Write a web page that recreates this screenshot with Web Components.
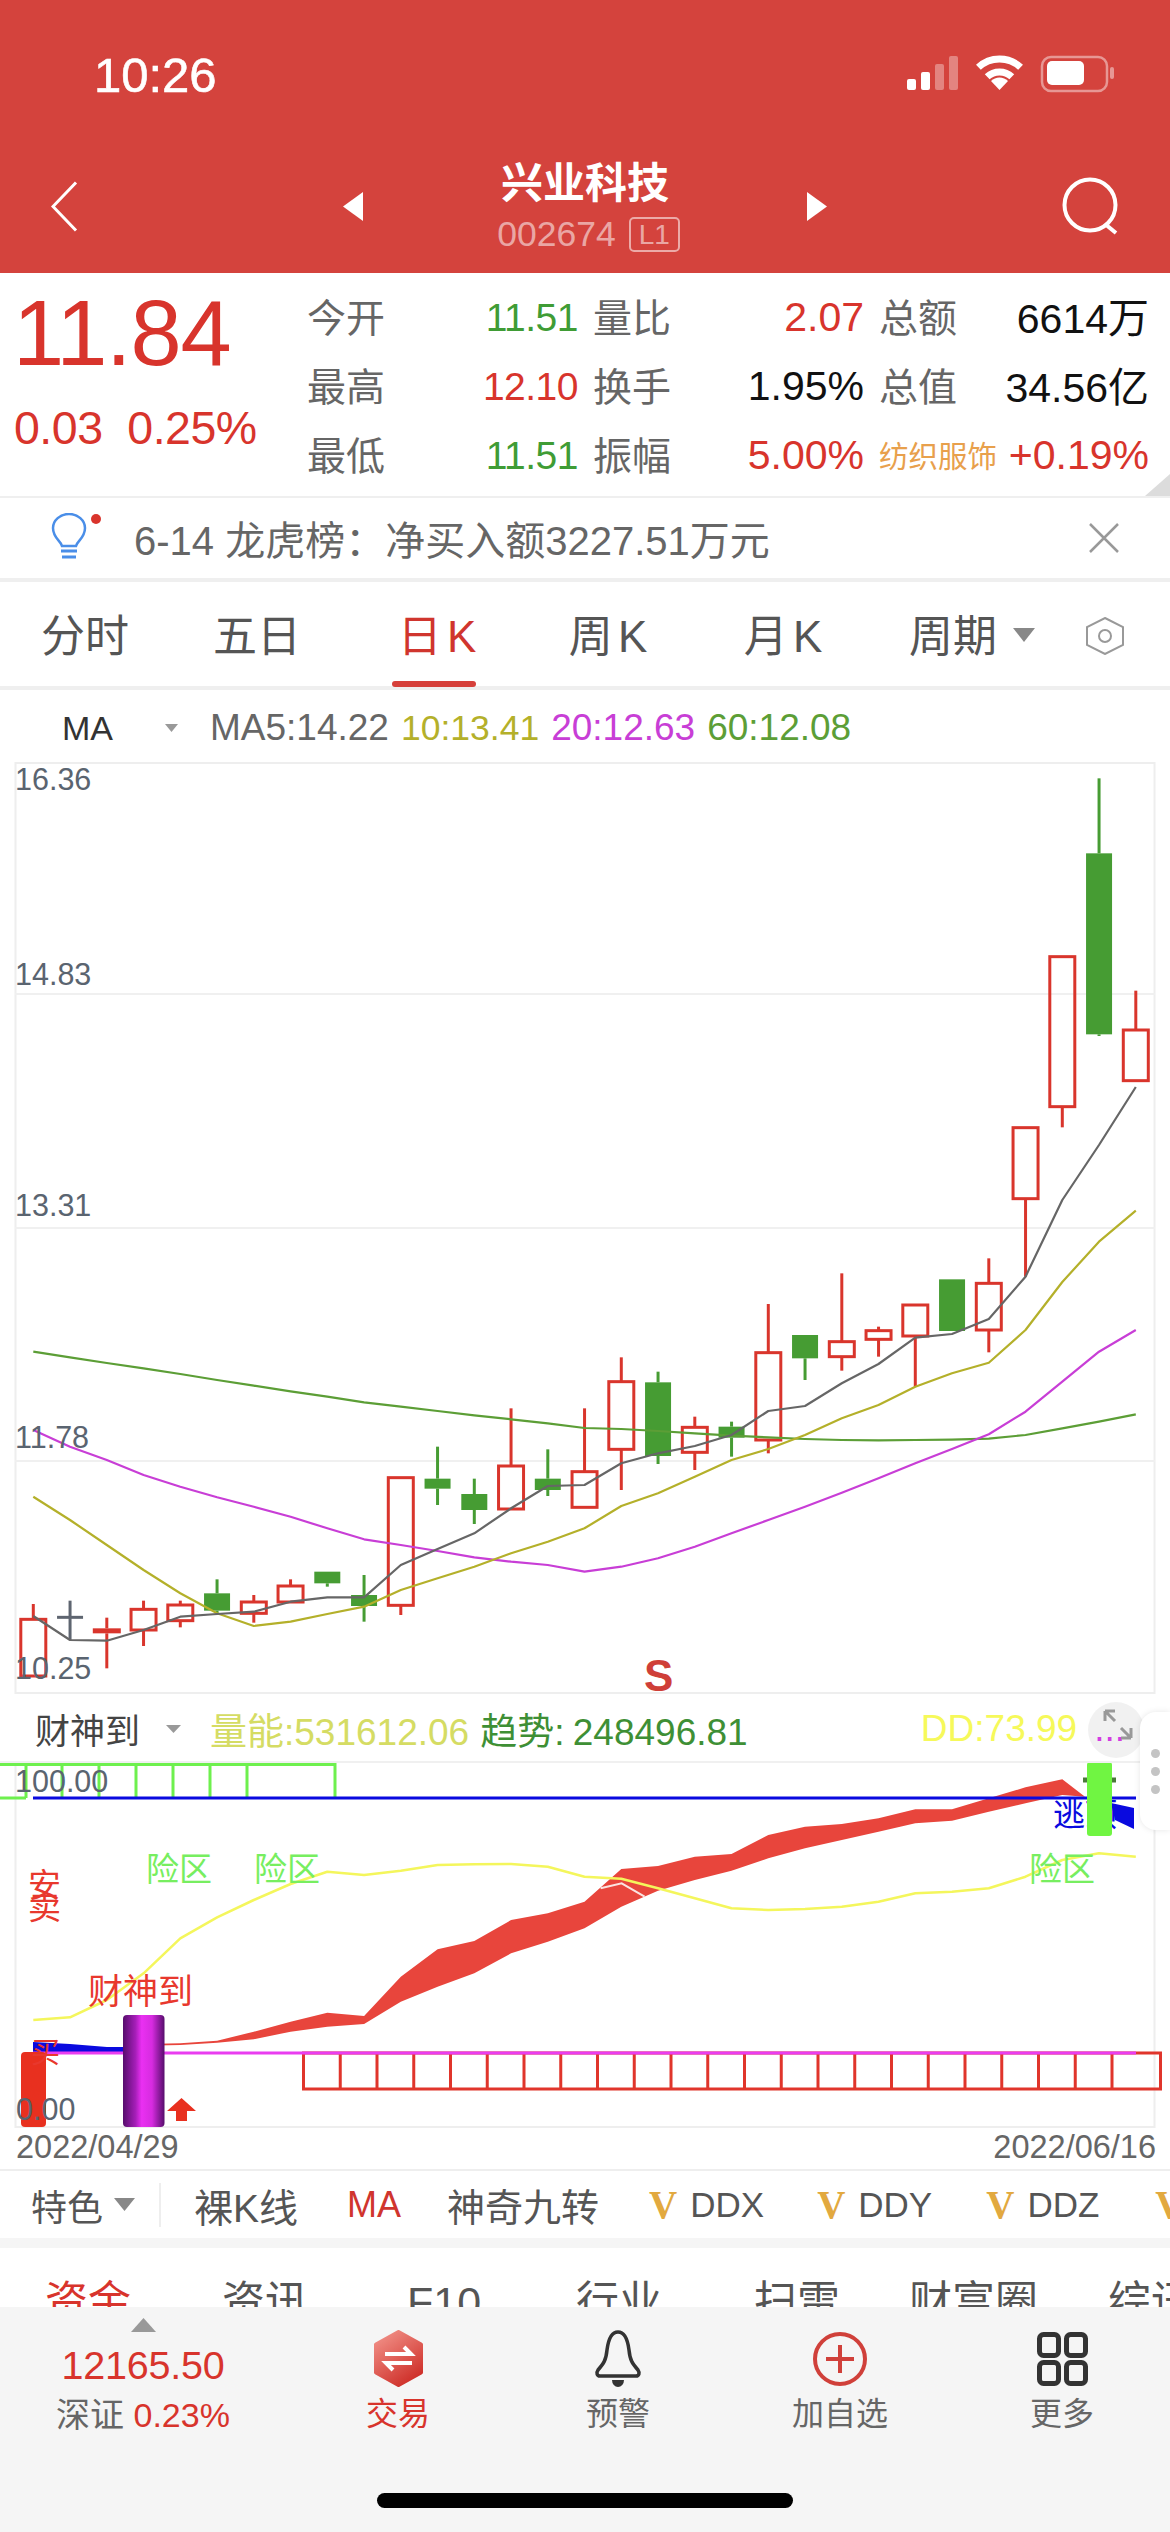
<!DOCTYPE html>
<html lang="zh">
<head>
<meta charset="utf-8">
<title>兴业科技</title>
<style>
  html, body { margin: 0; background: #fff; }
  body {
    width: 1170px; height: 2532px; overflow: hidden;
    font-family: "Liberation Sans", "Noto Sans CJK SC", sans-serif;
    color: #333;
  }
</style>
</head>
<body>
<status-bar></status-bar>
<stock-nav name="兴业科技" code="002674"></stock-nav>
<quote-panel></quote-panel>
<notice-bar>6-14 龙虎榜：净买入额3227.51万元</notice-bar>
<period-tabs>
  <period-tab>分时</period-tab>
  <period-tab>五日</period-tab>
  <period-tab active>日 K</period-tab>
  <period-tab>周 K</period-tab>
  <period-tab>月 K</period-tab>
  <period-tab caret>周期</period-tab>
</period-tabs>
<ma-legend></ma-legend>
<kline-chart></kline-chart>
<indicator-head></indicator-head>
<indicator-chart></indicator-chart>
<date-axis from="2022/04/29" to="2022/06/16"></date-axis>
<chip-row></chip-row>
<detail-tabs></detail-tabs>
<bottom-bar>
  <index-item></index-item>
  <bottom-item label="交易" active>
    <svg width="51" height="57" viewBox="0 0 51 57">
      <defs><linearGradient id="tradeFill" x1="0.2" y1="0" x2="0.8" y2="1"><stop offset="0" stop-color="#f08d84"/><stop offset="1" stop-color="#cd2b25"/></linearGradient></defs>
      <path d="M25.5 2 L48 14.5 V42.5 L25.5 55 L3 42.5 V14.5 Z" fill="url(#tradeFill)" stroke="url(#tradeFill)" stroke-width="4" stroke-linejoin="round"/>
      <path d="M12 24 H38 L31 17 M39 33 H13 L20 40" fill="none" stroke="#fff" stroke-width="4"/>
    </svg>
  </bottom-item>
  <bottom-item label="预警">
    <svg width="48" height="57" viewBox="0 0 48 57">
      <path d="M24 2 C16 2 14 12 13 20 C12 30 10 33 4 40 C2 43 3 46 6 46 H42 C45 46 46 43 44 40 C38 33 36 30 35 20 C34 12 32 2 24 2 Z" fill="none" stroke="#333" stroke-width="3.5"/>
      <path d="M18 50 H30 A6 7 0 0 1 18 50 Z" fill="#333"/>
    </svg>
  </bottom-item>
  <bottom-item label="加自选">
    <svg width="54" height="54" viewBox="0 0 54 54">
      <circle cx="27" cy="27" r="25" fill="none" stroke="#d0403a" stroke-width="4"/>
      <path d="M27 13 V41 M13 27 H41" stroke="#d0403a" stroke-width="4"/>
    </svg>
  </bottom-item>
  <bottom-item label="更多">
    <svg width="51" height="54" viewBox="0 0 51 54">
      <g fill="none" stroke="#333" stroke-width="5">
        <rect x="2.5" y="2.5" width="19" height="21" rx="4"/>
        <rect x="29.5" y="2.5" width="19" height="21" rx="4"/>
        <rect x="2.5" y="30.5" width="19" height="21" rx="4"/>
        <rect x="29.5" y="30.5" width="19" height="21" rx="4"/>
      </g>
    </svg>
  </bottom-item>
</bottom-bar>

<script>
const RED = '#d8342c';
const GREEN = '#3f9c35';
// x of the n-th candle, shared by both charts
const slotX = (i) => 33.3 + 36.75 * i;

class StatusBar extends HTMLElement {
  connectedCallback() {
    this.attachShadow({ mode: 'open' });
    this.shadowRoot.innerHTML = `
      <style>
        :host { display: flex; align-items: center; justify-content: space-between; height: 149px; box-sizing: border-box;
                padding: 0 52px 0 94px; background: #d4433d; color: #fff; }
        .time { font-size: 49px; font-weight: 500; -webkit-text-stroke: 0.6px #fff; }
        svg { display: block; margin-top: -1px; }
      </style>
      <span class="time">10:26</span>
      <svg width="211" height="40" viewBox="0 0 211 40">
        <g fill="#fff">
          <rect x="0" y="25" width="9" height="11" rx="2"/>
          <rect x="14" y="18" width="9" height="18" rx="2"/>
          <rect x="28" y="10" width="9" height="26" rx="2" opacity=".35"/>
          <rect x="42" y="2" width="9" height="34" rx="2" opacity=".35"/>
          <path d="M92.500 36 L84 27 A12 12 0 0 1 101 27 Z"/>
        </g>
        <g fill="none" stroke="#fff" stroke-width="7">
          <path d="M71.400 13.300 A31 31 0 0 1 113.600 13.300"/>
          <path d="M80.200 22.800 A18 18 0 0 1 104.800 22.800"/>
        </g>
        <rect x="135" y="3" width="65" height="34" rx="9" fill="none" stroke="#fff" stroke-width="2.500" opacity=".45"/>
        <rect x="140" y="7" width="37" height="24" rx="5" fill="#fff"/>
        <rect x="203" y="13" width="4" height="12" rx="2" fill="#fff" opacity=".45"/>
      </svg>
    `;
  }
}

class StockNav extends HTMLElement {
  connectedCallback() {
    this.attachShadow({ mode: 'open' });
    this.shadowRoot.innerHTML = `
      <style>
        :host { display: grid; grid-template-columns: 343px 20px 1fr 20px 343px; height: 124px; background: #d4433d; color: #fff; }
        .cell { display: flex; align-items: center; height: 114px; }
        .back { padding-left: 51px; }
        .search { justify-content: flex-end; padding-right: 50px; }
        .mid { text-align: center; }
        .name { font-size: 42px; line-height: 50px; margin-top: 10px; font-weight: 700; }
        .code { display: flex; justify-content: center; align-items: center; gap: 13px; height: 40px; margin-top: 5px; padding-left: 7px;
                color: rgba(255,255,255,.55); font-size: 35.500px; }
        .lv { border: 2px solid rgba(255,255,255,.55); border-radius: 5px; font-size: 28px; line-height: 31px; padding: 0 8px; }
      </style>
      <div class="cell back">
        <svg width="27" height="51" viewBox="0 0 27 51"><path d="M25 1.500 L2 25.500 L25 49.500" fill="none" stroke="#fff" stroke-width="3"/></svg>
      </div>
      <div class="cell">
        <svg width="20" height="29" viewBox="0 0 20 29"><path d="M20 0 V29 L0 14.500 Z" fill="#fff"/></svg>
      </div>
      <div class="mid">
        <div class="name">${this.getAttribute('name')}</div>
        <div class="code"><span>${this.getAttribute('code')}</span><span class="lv">L1</span></div>
      </div>
      <div class="cell">
        <svg width="20" height="29" viewBox="0 0 20 29"><path d="M0 0 V29 L20 14.500 Z" fill="#fff"/></svg>
      </div>
      <div class="cell search">
        <svg width="60" height="58" viewBox="0 0 60 58"><circle cx="30" cy="28" r="25.500" fill="none" stroke="#fff" stroke-width="4"/><path d="M45 47 L56 56" stroke="#fff" stroke-width="4"/></svg>
      </div>
    `;
  }
}

class QuotePanel extends HTMLElement {
  connectedCallback() {
    this.attachShadow({ mode: 'open' });
    const rows = [
      ['今开', '11.51', GREEN, '量比', '2.07', RED, '总额', '6614万', '#111'],
      ['最高', '12.10', RED, '换手', '1.95%', '#111', '总值', '34.56亿', '#111'],
      ['最低', '11.51', GREEN, '振幅', '5.00%', RED, '纺织服饰', '+0.19%', RED],
    ];
    const cells = rows.map((r) => `
      <span class="l">${r[0]}</span><span class="v first" style="color:${r[2]}">${r[1]}</span>
      <span class="l in">${r[3]}</span><span class="v" style="color:${r[5]}">${r[4]}</span>
      <span class="l in ${r[6].length > 2 ? 'sector' : ''}">${r[6]}</span><span class="v ${/[万亿]/.test(r[7]) ? 'unit' : ''}" style="color:${r[8]}">${r[7]}</span>
    `).join('');
    this.shadowRoot.innerHTML = `
      <style>
        :host { display: flex; position: relative; height: 225px; box-sizing: border-box; border-bottom: 2px solid #efefef; padding-left: 13px; }
        .price { width: 294px; color: ${RED}; }
        .big { font-size: 92px; line-height: 100px; margin-top: 10px; letter-spacing: -1.200px; }
        .chg { font-size: 46.500px; line-height: 50px; margin: 20px 0 0 1px; letter-spacing: -0.5px; white-space: pre; }
        .grid { display: grid; grid-template-columns: 77px 194px 92px 194px 92px 193px; grid-auto-rows: 69px; align-items: center; padding-top: 10px; white-space: nowrap; }
        .l { font-size: 39px; color: #666; margin-bottom: 6px; }
        .in { padding-left: 15px; }
        .sector { font-size: 29.500px; color: #e8a04c; margin-bottom: 4px; }
        .v { font-size: 41px; text-align: right; }
        .unit { margin-bottom: 6px; }
        .first { font-size: 39px; letter-spacing: -0.5px; }
        .corner { position: absolute; right: 0; bottom: 0; }
      </style>
      <div class="price">
        <div class="big">11.84</div>
        <div class="chg">0.03  0.25%</div>
      </div>
      <div class="grid">${cells}</div>
      <svg class="corner" width="25" height="22" viewBox="0 0 25 22"><path d="M25 0 V22 H0 Z" fill="#dcdcdc"/></svg>
    `;
  }
}

class NoticeBar extends HTMLElement {
  connectedCallback() {
    this.attachShadow({ mode: 'open' });
    this.shadowRoot.innerHTML = `
      <style>
        :host { display: flex; align-items: center; height: 84px; box-sizing: border-box; border-bottom: 4px solid #efefef; padding: 0 51px; }
        .text { margin-left: 33px; flex: 1; font-size: 40px; color: #666; white-space: nowrap; }
        svg { display: block; flex-shrink: 0; }
      </style>
      <svg width="50" height="50" viewBox="0 0 50 50">
        <path d="M11 33 C10 28 2 25 2 15 A16 14 0 0 1 34 15 C34 25 26 28 25 33 Z" fill="none" stroke="#4a8ee8" stroke-width="2.500"/>
        <path d="M10 38 H26 M11 44 H25" stroke="#4a8ee8" stroke-width="3"/>
        <circle cx="45" cy="6" r="5" fill="#d9342c"/>
      </svg>
      <span class="text"><slot></slot></span>
      <svg width="30" height="30" viewBox="0 0 30 30"><path d="M1 1 L29 29 M29 1 L1 29" stroke="#999" stroke-width="2.500"/></svg>
    `;
  }
}

class PeriodTabs extends HTMLElement {
  connectedCallback() {
    this.attachShadow({ mode: 'open' });
    this.shadowRoot.innerHTML = `
      <style>
        :host { display: grid; grid-template-columns: 170px 174px 186px 156px 194px 146px 1fr; position: relative; height: 108px; box-sizing: border-box; border-bottom: 4px solid #efefef; }
        svg { align-self: center; margin: 4px 0 0 57px; }
      </style>
      <slot></slot>
      <svg width="44" height="38" viewBox="0 0 44 38"><path d="M22 1 L40 10 V28 L22 37 L4 28 V10 Z" fill="none" stroke="#999" stroke-width="2"/><circle cx="22" cy="19" r="6" fill="none" stroke="#999" stroke-width="2"/></svg>
    `;
  }
}

class PeriodTab extends HTMLElement {
  connectedCallback() {
    this.attachShadow({ mode: 'open' });
    const active = this.hasAttribute('active');
    const caret = this.hasAttribute('caret');
    this.shadowRoot.innerHTML = `
      <style>
        :host { display: flex; align-items: center; justify-content: center; gap: 16px; position: relative; height: 104px; padding-bottom: 2px; box-sizing: border-box;
                font-size: 44px; word-spacing: -7px; white-space: nowrap; color: ${active ? '#d0352e' : '#555'}; }
        .bar { position: absolute; left: calc(50% - 45px); bottom: -1px; width: 84px; height: 6px; border-radius: 3px; background: #d6403a; }
        .caret { margin-right: -38px; margin-top: 4px; }
      </style>
      <slot></slot>
      ${caret ? '<svg class="caret" width="22" height="14" viewBox="0 0 22 14"><path d="M0 0 H22 L11 14 Z" fill="#888"/></svg>' : ''}
      ${active ? '<span class="bar"></span>' : ''}
    `;
  }
}

class MaLegend extends HTMLElement {
  connectedCallback() {
    this.attachShadow({ mode: 'open' });
    this.shadowRoot.innerHTML = `
      <style>
        :host { display: flex; align-items: center; height: 72px; padding: 4px 0 0 62px; box-sizing: border-box; font-size: 34px; white-space: nowrap; }
        .name { color: #333; }
        svg { margin: 0 32px 0 52px; }
        span + span { margin-left: 12px; }
        .n { font-size: 37px; }
      </style>
      <span class="name">MA</span>
      <svg width="13" height="8" viewBox="0 0 13 8"><path d="M0 0 H13 L6.500 8 Z" fill="#999"/></svg>
      <span class="n" style="color:#666">MA5:14.22</span>
      <span class="n" style="color:#b4b02a;font-size:35.500px">10:13.41</span>
      <span class="n" style="color:#c83ed6">20:12.63</span>
      <span class="n" style="color:#5c9e36">60:12.08</span>
    `;
  }
}

const polyline = (vals, yOf, color, width) => {
  const pts = vals.map((v, i) => `${slotX(i).toFixed(1)},${yOf(v).toFixed(1)}`).join(' ');
  return `<polyline points="${pts}" fill="none" stroke="${color}" stroke-width="${width}" stroke-linejoin="round"/>`;
};

class KlineChart extends HTMLElement {
  connectedCallback() {
    this.attachShadow({ mode: 'open' });
    // values are read off 3x crops: y = 1250 + v / 3
    const yOf = (v) => 1250 + v / 3;
    // [wick top, body top, body bottom, wick bottom, kind]
    const candles = [
      [1062, 1108, 1278, 1278, 'r'], [1052, 1102, 1102, 1170, 'd'], [1103, 1135, 1150, 1255, 'f'], [1052, 1078, 1140, 1188, 'r'],
      [1052, 1065, 1112, 1132, 'r'], [988, 1030, 1082, 1090, 'g'], [1035, 1056, 1090, 1118, 'r'], [988, 1008, 1056, 1056, 'r'],
      [965, 965, 1000, 1010, 'g'], [975, 1035, 1068, 1115, 'g'], [683, 683, 1066, 1095, 'r'], [590, 686, 716, 765, 'g'],
      [686, 732, 780, 822, 'g'], [475, 648, 777, 777, 'r'], [598, 686, 720, 738, 'g'], [475, 665, 772, 772, 'r'],
      [322, 395, 598, 720, 'r'], [365, 397, 618, 642, 'g'], [500, 532, 607, 660, 'r'], [515, 530, 563, 620, 'g'],
      [162, 308, 570, 610, 'r'], [255, 255, 325, 390, 'g'], [70, 275, 320, 362, 'r'], [230, 242, 268, 320, 'r'],
      [165, 165, 258, 410, 'r'], [88, 88, 243, 243, 'g'], [25, 100, 240, 307, 'r'], [-367, -367, -154, 80, 'r'],
      [-880, -880, -430, -368, 'r'], [-1415, -1190, -647, -642, 'g'], [-778, -660, -508, -508, 'r'],
    ];
    const ma5 = [1098, 1170, 1172, 1140, 1100, 1092, 1085, 1055, 1042, 1042, 945, 897, 850, 775, 708, 705, 640, 610, 588, 555, 483, 468, 400, 342, 263, 252, 207, 80, -150, -315, -489];
    const ma10 = [740, 810, 885, 960, 1030, 1090, 1128, 1115, 1092, 1070, 1020, 985, 950, 910, 875, 835, 768, 730, 680, 630, 597, 555, 505, 465, 410, 370, 338, 240, 96, -25, -118];
    const ma20 = [540, 590, 630, 675, 710, 742, 770, 800, 835, 868, 885, 903, 922, 935, 945, 965, 950, 925, 890, 850, 810, 770, 728, 685, 640, 597, 553, 485, 395, 305, 240];
    const ma60 = [305, 322, 339, 355, 372, 390, 407, 424, 440, 457, 470, 483, 496, 508, 520, 534, 537, 543, 550, 557, 562, 567, 570, 571, 570, 569, 566, 555, 535, 515, 493];

    const bars = candles.map(([wt, bt, bb, wb, kind], i) => {
      const x = slotX(i);
      const c = kind === 'g' ? '#469c33' : kind === 'd' ? '#5e6570' : '#d9352c';
      let out = '';
      if (wt < bt) out += `<line x1="${x}" x2="${x}" y1="${yOf(wt)}" y2="${yOf(bt)}" stroke="${c}" stroke-width="3"/>`;
      if (wb > bb) out += `<line x1="${x}" x2="${x}" y1="${yOf(bb)}" y2="${yOf(wb)}" stroke="${c}" stroke-width="3"/>`;
      const top = yOf(bt), h = yOf(bb) - top;
      if (kind === 'd') out += `<line x1="${x - 13}" x2="${x + 13}" y1="${top}" y2="${top}" stroke="${c}" stroke-width="3"/>`;
      if (kind === 'r') out += `<rect x="${x - 12.5}" y="${top}" width="25" height="${h}" fill="none" stroke="${c}" stroke-width="3"/>`;
      if (kind === 'g') out += `<rect x="${x - 13}" y="${top}" width="26" height="${h}" fill="${c}"/>`;
      if (kind === 'f') out += `<rect x="${x - 14}" y="${top}" width="28" height="${h}" fill="${c}"/>`;
      return out;
    }).join('');

    this.shadowRoot.innerHTML = `
      <style>
        :host { display: block; height: 932px; }
        svg { display: block; }
        .lb { font-size: 30.500px; fill: #5a6470; }
        .s { font-size: 44px; font-weight: 700; fill: #cf3f38; }
      </style>
      <svg width="1170" height="932" viewBox="0 762 1170 932">
        <rect x="15.500" y="763" width="1139" height="930" fill="none" stroke="#eee" stroke-width="2"/>
        <path d="M15 994 H1155 M15 1228 H1155 M15 1461 H1155" stroke="#f0f0f0" stroke-width="2"/>
        ${bars}
        ${polyline(ma60, yOf, '#5c9e36', 2.2)}
        ${polyline(ma20, yOf, '#c83ed6', 2.2)}
        ${polyline(ma10, yOf, '#b4b02a', 2.2)}
        ${polyline(ma5, yOf, '#666', 2.2)}
        <text class="lb" x="15" y="790">16.36</text>
        <text class="lb" x="15" y="985">14.83</text>
        <text class="lb" x="15" y="1216">13.31</text>
        <text class="lb" x="15" y="1448">11.78</text>
        <text class="lb" x="15" y="1679">10.25</text>
        <text class="s" x="644" y="1691">S</text>
      </svg>
    `;
  }
}

class IndicatorHead extends HTMLElement {
  connectedCallback() {
    this.attachShadow({ mode: 'open' });
    this.shadowRoot.innerHTML = `
      <style>
        :host { display: flex; align-items: center; position: relative; z-index: 2; height: 69px; box-sizing: border-box; padding: 2px 45px 0 35px; font-size: 37px; white-space: nowrap; border-bottom: 2px solid #f0f0f0; }
        .tri { margin: 0 29px 0 26px; }
        .expand { position: absolute; left: 1088px; top: 8px; width: 56px; height: 56px; border-radius: 50%; background: rgba(0,0,0,.055); }
        .side { position: absolute; left: 1140px; top: 18px; width: 30px; height: 118px; background: #fff; border-radius: 16px 0 0 16px; box-shadow: 0 0 6px rgba(0,0,0,.1); display: flex; flex-direction: column; justify-content: center; align-items: center; gap: 9px; }
        .side i { width: 9px; height: 9px; border-radius: 50%; background: #c4c4c4; }
      </style>
      <span style="color:#444;font-size:35px">财神到</span>
      <svg class="tri" width="15" height="8" viewBox="0 0 15 8"><path d="M0 0 H15 L7.500 8 Z" fill="#999"/></svg>
      <span style="color:#d5dc63">量能:531612.06</span>
      <span style="color:#3e8f35;margin-left:11px;word-spacing:-2px">趋势: 248496.81</span>
      <span style="color:#f6f95a;margin-left:auto">DD:73.99</span>
      <span style="color:#e040f0;margin-left:17px">...</span>
      <svg class="expand" viewBox="0 0 56 56"><path d="M17 9 H27 M17 9 V19 M17 9 L27 19 M43 36 V26 M43 36 H33 M43 36 L33 26" fill="none" stroke="#999" stroke-width="3"/></svg>
      <div class="side"><i></i><i></i><i></i></div>
    `;
  }
}

class IndicatorChart extends HTMLElement {
  connectedCallback() {
    this.attachShadow({ mode: 'open' });
    // same idea as the k-line chart: y = 1680 + v / 3
    const yOf = (v) => 1680 + v / 3;
    const dd = [1020, 1012, 960, 880, 775, 712, 660, 612, 575, 585, 572, 555, 553, 552, 560, 590, 596, 625, 655, 685, 690, 687, 680, 665, 640, 635, 625, 590, 540, 520, 530];
    const top = [1092, 1090, 1082, 1055, 1025, 998, 1008, 890, 808, 783, 720, 700, 665, 567, 558, 530, 522, 465, 440, 432, 415, 388, 388, 355, 322, 298];
    const low = [1097, 1095, 1088, 1078, 1055, 1040, 1032, 965, 920, 880, 820, 785, 745, 680, 632, 600, 572, 535, 505, 480, 455, 430, 422, 395, 370, 345];
    const pt = (v, i) => `${slotX(i + 3).toFixed(1)},${yOf(v).toFixed(1)}`;
    const ribbon = top.map(pt).join(' ') + ` 1085,${yOf(350)} ` + low.map(pt).reverse().join(' ');

    const greens = [26, 62, 99, 136, 173, 210, 247].map((x) => `M${x} 1764 V1798`).join(' ');
    let reds = '';
    for (let k = 1; k <= 22; k++) reds += `M${303.5 + 36.75 * k} 2053 V2089 `;

    this.shadowRoot.innerHTML = `
      <style>
        :host { display: block; height: 364px; }
        svg { display: block; overflow: visible; }
        .lb { font-size: 30.500px; fill: #5a6470; }
        .risk { font-size: 33px; fill: #77ee60; }
        .rd { fill: #e8382d; }
        .tip { font-size: 32px; fill: #0a0adf; }
      </style>
      <svg width="1170" height="364" viewBox="0 1763 1170 364">
        <defs>
          <linearGradient id="pillar" x1="0" x2="1" y1="0" y2="0">
            <stop offset="0" stop-color="#560d6c"/><stop offset=".3" stop-color="#a51eb8"/><stop offset=".45" stop-color="#ea30f2"/>
            <stop offset=".7" stop-color="#d62be0"/><stop offset="1" stop-color="#560d6c"/>
          </linearGradient>
        </defs>
        <path d="M15.500 1763 V2127 H1154.500 V1763" fill="none" stroke="#eee" stroke-width="2"/>
        <path d="M-3 1764.500 H335 V1798 M-3 1798 H26 ${greens}" fill="none" stroke="#6ef04e" stroke-width="3"/>
        <polygon points="${ribbon}" fill="#e8453c"/>
        <polyline points="${570 + 80 / 2.613},${yOf(625)} ${570 + 135 / 2.613},${yOf(610)} ${570 + 195 / 2.613},${yOf(650)}" fill="none" stroke="#fbe3e0" stroke-width="2"/>
        ${polyline(dd, yOf, '#f4f65c', 2.5)}
        <path d="M33 1798 H1136" stroke="#0a0adf" stroke-width="3"/>
        <polygon points="33,2042 70,2044 107,2047 124,2047 124,2053 33,2053" fill="#0a0adf"/>
        <polygon points="1111,1803 1134,1808 1134,1829 1115,1820" fill="#0a0adf"/>
        <rect x="303.500" y="2053" width="857" height="36" fill="none" stroke="#e0352b" stroke-width="3"/>
        <path d="${reds}" stroke="#e0352b" stroke-width="3"/>
        <path d="M33 2053 H1136" stroke="#e93df0" stroke-width="3"/>
        <rect x="21" y="2052" width="25" height="75" rx="4" fill="#e8301f"/>
        <rect x="123" y="2015" width="41.500" height="112" rx="4" fill="url(#pillar)"/>
        <path d="M181.500 2098 L196 2111 H187 V2121 H176 V2111 H167 Z" fill="#e8301f"/>
        <path d="M1083 1780 H1116" stroke="#4a7a3a" stroke-width="5"/>
        <text class="tip" x="1053" y="1826">逃顶</text>
        <rect x="1087" y="1762" width="25" height="74" rx="3" fill="#70f542"/>
        <text class="lb" x="15" y="1792">100.00</text>
        <text class="lb" x="16" y="2120">0.00</text>
        <text class="rd" x="28" y="1897" font-size="33">安</text>
        <text class="rd" x="28" y="1919" font-size="33">卖</text>
        <text class="rd" x="31" y="2063" font-size="29">买</text>
        <text class="rd" x="88" y="2004" font-size="35">财神到</text>
        <text class="risk" x="146" y="1881">险区</text>
        <text class="risk" x="254" y="1881">险区</text>
        <text class="risk" x="1029" y="1881">险区</text>
      </svg>
    `;
  }
}

class DateAxis extends HTMLElement {
  connectedCallback() {
    this.attachShadow({ mode: 'open' });
    this.shadowRoot.innerHTML = `
      <style>
        :host { display: flex; justify-content: space-between; align-items: center; height: 44px; box-sizing: border-box; padding: 0 14px 2px 16px; font-size: 32.500px; color: #666; border-bottom: 2px solid #eee; }
      </style>
      <span>${this.getAttribute('from')}</span><span>${this.getAttribute('to')}</span>
    `;
  }
}

class ChipRow extends HTMLElement {
  connectedCallback() {
    this.attachShadow({ mode: 'open' });
    this.shadowRoot.innerHTML = `
      <style>
        :host { display: flex; align-items: center; height: 77px; box-sizing: border-box; border-bottom: 10px solid #f5f5f5; padding-left: 31px; overflow: hidden; font-size: 36px; color: #555; white-space: nowrap; }
        .sep { width: 2px; height: 44px; background: #eee; margin: 0 33px 0 24px; flex-shrink: 0; }
        .wide { font-size: 38px; }
        .gold { font-family: "Liberation Serif", serif; font-weight: 700; font-size: 39px; color: #e2a93f; }
        .name { margin-left: 13px; font-size: 35px; }
        svg { margin-left: 11px; flex-shrink: 0; }
        span { flex-shrink: 0; }
      </style>
      <span>特色</span>
      <svg width="21" height="13" viewBox="0 0 21 13"><path d="M0 0 H21 L10.500 13 Z" fill="#888"/></svg>
      <i class="sep"></i>
      <span class="wide" style="font-size:39px">裸K线</span>
      <span style="margin-left:49px;color:#d0352e">MA</span>
      <span class="wide" style="margin-left:46px">神奇九转</span>
      <span class="gold" style="margin-left:50px">V</span><span class="name">DDX</span>
      <span class="gold" style="margin-left:53px">V</span><span class="name">DDY</span>
      <span class="gold" style="margin-left:54px">V</span><span class="name">DDZ</span>
      <span class="gold" style="margin-left:56px">V</span><span class="name">DDE</span>
    `;
  }
}

class DetailTabs extends HTMLElement {
  connectedCallback() {
    this.attachShadow({ mode: 'open' });
    // the row is cut off by the bottom bar, as in the app
    this.shadowRoot.innerHTML = `
      <style>
        :host { display: grid; grid-template-columns: 177px 185px 169px 178px 155px 199px 1fr; align-items: baseline; height: 59px; overflow: hidden; padding: 19px 0 0 45px; box-sizing: border-box; font-size: 43px; color: #555; white-space: nowrap; }
      </style>
      <span style="color:#d8342c">资金</span><span>资讯</span><span>F10</span><span>行业</span><span>扫雷</span><span>财富圈</span><span>综讯</span>
    `;
  }
}

class BottomBar extends HTMLElement {
  connectedCallback() {
    this.attachShadow({ mode: 'open' });
    this.shadowRoot.innerHTML = `
      <style>
        :host { display: flex; flex-direction: column; height: 225px; background: #f5f5f5; }
        .items { display: grid; grid-template-columns: 286px 224px 216px 228px 216px; }
        .home { width: 416px; height: 15px; border-radius: 8px; background: #000; margin: auto 0 24px 377px; }
      </style>
      <div class="items"><slot></slot></div>
      <div class="home"></div>
    `;
  }
}

class IndexItem extends HTMLElement {
  connectedCallback() {
    this.attachShadow({ mode: 'open' });
    this.shadowRoot.innerHTML = `
      <style>
        :host { display: flex; flex-direction: column; align-items: center; padding-top: 11px; white-space: nowrap; }
        .num { font-size: 39.500px; line-height: 44px; margin-top: 11px; color: #d8342c; letter-spacing: -0.2px; }
        .sub { font-size: 34px; line-height: 40px; margin-top: 8px; color: #666; }
        .sub b { font-weight: 400; color: #d8342c; }
        svg { display: block; }
      </style>
      <svg width="25" height="14" viewBox="0 0 25 14"><path d="M12.500 0 L25 14 H0 Z" fill="#999"/></svg>
      <div class="num">12165.50</div>
      <div class="sub">深证 <b>0.23%</b></div>
    `;
  }
}

class BottomItem extends HTMLElement {
  connectedCallback() {
    this.attachShadow({ mode: 'open' });
    const color = this.hasAttribute('active') ? '#d8342c' : '#666';
    this.shadowRoot.innerHTML = `
      <style>
        :host { display: flex; flex-direction: column; align-items: center; padding-top: 23px; }
        .icon { display: flex; align-items: center; height: 57px; }
        .label { font-size: 32px; line-height: 40px; margin-top: 7px; color: ${color}; white-space: nowrap; }
      </style>
      <div class="icon"><slot></slot></div>
      <div class="label">${this.getAttribute('label')}</div>
    `;
  }
}

customElements.define('status-bar', StatusBar);
customElements.define('stock-nav', StockNav);
customElements.define('quote-panel', QuotePanel);
customElements.define('notice-bar', NoticeBar);
customElements.define('period-tabs', PeriodTabs);
customElements.define('period-tab', PeriodTab);
customElements.define('ma-legend', MaLegend);
customElements.define('kline-chart', KlineChart);
customElements.define('indicator-head', IndicatorHead);
customElements.define('indicator-chart', IndicatorChart);
customElements.define('date-axis', DateAxis);
customElements.define('chip-row', ChipRow);
customElements.define('detail-tabs', DetailTabs);
customElements.define('bottom-bar', BottomBar);
customElements.define('index-item', IndexItem);
customElements.define('bottom-item', BottomItem);
</script>
</body>
</html>
